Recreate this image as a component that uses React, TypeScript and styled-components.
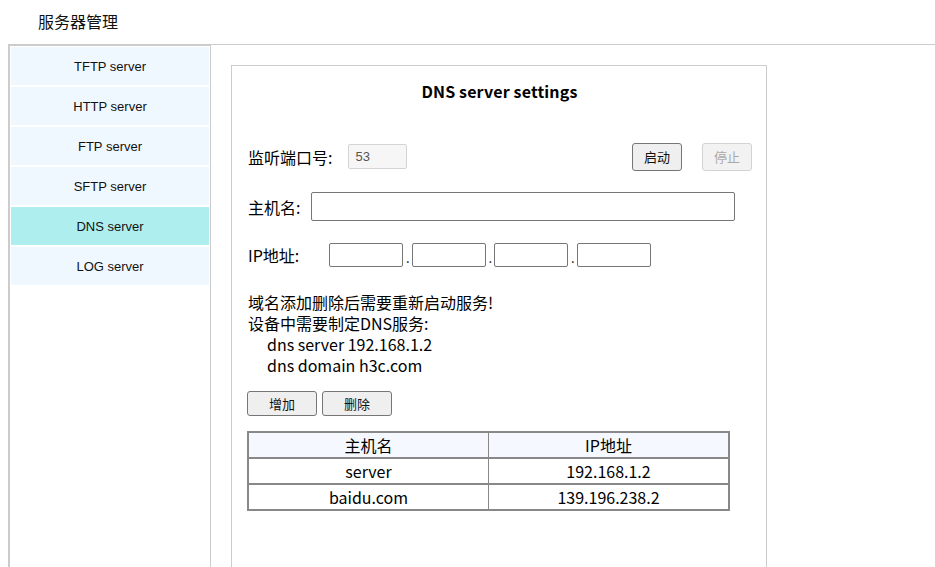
import React from "react";
import styled, { createGlobalStyle } from "styled-components";

const GlobalStyle = createGlobalStyle`
  html, body { margin: 0; padding: 0; background: #fff; }
  body { font-family: "Noto Sans CJK SC", "Noto Sans", sans-serif; color: #000; }
  * { box-sizing: border-box; }
`;

const Page = styled.div`
  display: flex;
  flex-direction: column;
  min-height: 100vh;
  padding-left: 8px;
`;

const Header = styled.div`
  height: 44px;
  padding-left: 30px;
  display: flex;
  align-items: center;
  font-size: 16px;
  color: #111;
  padding-bottom: 2px;
`;

const Body = styled.div`
  flex: 1;
  display: flex;
  border-top: 1px solid #cccccc;
`;

const Sidebar = styled.nav`
  width: 203px;
  flex: none;
  border-left: 2px solid #cccccc;
  border-top: 1px solid #cccccc;
  border-right: 1px solid #cccccc;
  padding: 1px;
  display: flex;
  flex-direction: column;
  gap: 2px;
`;

const NavItem = styled.div<{ $active?: boolean }>`
  height: 38px;
  display: flex;
  align-items: center;
  justify-content: center;
  font-family: "Liberation Sans", Arial, sans-serif;
  font-size: 13px;
  color: #111;
  background: ${(p) => (p.$active ? "#afeeee" : "#f0f8ff")};
`;

const Main = styled.main`
  flex: 1;
  display: flex;
  padding: 20px 0 0 20px;
`;

const Panel = styled.section`
  width: 536px;
  border: 1px solid #cccccc;
  border-bottom: none;
  padding: 13px 14px 0 15px;
`;

const Title = styled.h2`
  margin: 0;
  height: 24px;
  line-height: 24px;
  text-align: center;
  font-size: 16px;
  font-weight: bold;
  letter-spacing: 0.15px;
`;

const Row = styled.div<{ $top: number; $h: number }>`
  display: flex;
  align-items: center;
  margin-top: ${(p) => p.$top}px;
  height: ${(p) => p.$h}px;
`;

const Label = styled.span<{ $gap: number }>`
  font-size: 16px;
  margin-left: 1px;
  margin-right: ${(p) => p.$gap}px;
  white-space: nowrap;
`;

const TextInput = styled.input<{ $w: number; $h: number; $disabled?: boolean }>`
  width: ${(p) => p.$w}px;
  height: ${(p) => p.$h}px;
  border: 1px solid ${(p) => (p.$disabled ? "#d4d4d4" : "#767676")};
  border-radius: 2px;
  background: ${(p) => (p.$disabled ? "#f6f6f6" : "#fff")};
  color: #555;
  font-family: "Liberation Sans", Arial, sans-serif;
  font-size: 13px;
  padding: 0 6px;
  outline: none;
`;

const Spacer = styled.div`
  flex: 1;
`;

const Button = styled.button<{ $w: number; $h: number; $disabled?: boolean }>`
  width: ${(p) => p.$w}px;
  height: ${(p) => p.$h}px;
  border: 1px solid ${(p) => (p.$disabled ? "#d2d2d2" : "#767676")};
  border-radius: 3px;
  background: ${(p) => (p.$disabled ? "#f2f2f2" : "#efefef")};
  color: ${(p) => (p.$disabled ? "#a9a9a9" : "#111")};
  font-family: "Noto Sans CJK SC", sans-serif;
  font-size: 13px;
  padding: 0;
  cursor: default;
`;

const ButtonGroup = styled.div<{ $gap: number }>`
  display: flex;
  gap: ${(p) => p.$gap}px;
`;

const IpGroup = styled.div`
  display: flex;
  align-items: flex-end;
`;

const Dot = styled.span<{ $w: number }>`
  width: ${(p) => p.$w}px;
  text-align: center;
  font-size: 13px;
  line-height: 14px;
  padding-bottom: 2px;
`;

const Notes = styled.div`
  margin-top: 25px;
  margin-left: 1px;
  font-size: 16px;
  line-height: 21px;
`;

const Indented = styled.div`
  padding-left: 19px;
`;

const Table = styled.table`
  margin-top: 15px;
  width: 483px;
  border-collapse: collapse;
  border: 2px solid #888888;
  font-size: 16px;
  table-layout: fixed;
`;

const Th = styled.th`
  background: #f5f9ff;
  font-weight: normal;
  height: 26px;
  padding: 0;
  border-bottom: 2px solid #888888;
  border-right: 1px solid #888888;
  &:last-child { border-right: none; }
`;

const Td = styled.td`
  height: 26px;
  padding: 0;
  text-align: center;
  border-bottom: 2px solid #888888;
  border-right: 1px solid #888888;
  &:last-child { border-right: none; }
`;

const navItems = ["TFTP server", "HTTP server", "FTP server", "SFTP server", "DNS server", "LOG server"];
const hosts = [
  { name: "server", ip: "192.168.1.2" },
  { name: "baidu.com", ip: "139.196.238.2" },
];

export default function App() {
  return (
    <>
      <GlobalStyle />
      <Page>
        <Header>服务器管理</Header>
        <Body>
          <Sidebar>
            {navItems.map((n) => (
              <NavItem key={n} $active={n === "DNS server"}>
                {n}
              </NavItem>
            ))}
          </Sidebar>
          <Main>
            <Panel>
              <Title>DNS server settings</Title>
              <Row $top={39} $h={29}>
                <Label $gap={16}>监听端口号:</Label>
                <TextInput $w={59} $h={25} $disabled readOnly defaultValue="53" />
                <Spacer />
                <ButtonGroup $gap={20}>
                  <Button $w={50} $h={28}>启动</Button>
                  <Button $w={50} $h={28} $disabled>停止</Button>
                </ButtonGroup>
              </Row>
              <Row $top={21} $h={29}>
                <Label $gap={11}>主机名:</Label>
                <TextInput $w={424} $h={29} />
              </Row>
              <Row $top={22} $h={24}>
                <Label $gap={30}>IP地址:</Label>
                <IpGroup>
                  <TextInput $w={74} $h={24} />
                  <Dot $w={9}>.</Dot>
                  <TextInput $w={74} $h={24} />
                  <Dot $w={8}>.</Dot>
                  <TextInput $w={74} $h={24} />
                  <Dot $w={9}>.</Dot>
                  <TextInput $w={74} $h={24} />
                </IpGroup>
              </Row>
              <Notes>
                <div>域名添加删除后需要重新启动服务!</div>
                <div>设备中需要制定DNS服务:</div>
                <Indented>dns server 192.168.1.2</Indented>
                <Indented>dns domain h3c.com</Indented>
              </Notes>
              <Row $top={15} $h={25}>
                <ButtonGroup $gap={5}>
                  <Button $w={70} $h={25}>增加</Button>
                  <Button $w={70} $h={25}>删除</Button>
                </ButtonGroup>
              </Row>
              <Table>
                <thead>
                  <tr>
                    <Th>主机名</Th>
                    <Th>IP地址</Th>
                  </tr>
                </thead>
                <tbody>
                  {hosts.map((h) => (
                    <tr key={h.name}>
                      <Td>{h.name}</Td>
                      <Td>{h.ip}</Td>
                    </tr>
                  ))}
                </tbody>
              </Table>
            </Panel>
          </Main>
        </Body>
      </Page>
    </>
  );
}
